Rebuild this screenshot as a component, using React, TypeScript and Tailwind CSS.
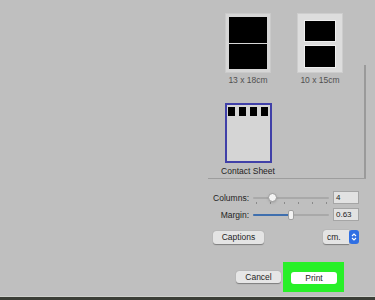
import React from 'react';

// Print dialog fragment: layout thumbnails, sliders and the action buttons
const COLUMN_TICKS = [3, 17, 31, 45, 59, 73];

const Slider: React.FC<{ value: number; knob: 'round' | 'flat'; fill?: boolean; ticks?: boolean }> = ({ value, knob, fill, ticks }) => (
  <div className="relative w-[76px] h-[12px]">
    <div className="absolute left-0 right-0 top-[5px] h-[2px] rounded-full bg-[#a9a9a9]" />
    {fill && <div className="absolute left-0 top-[5px] h-[2px] rounded-full bg-[#3f6fae]" style={{ width: value }} />}
    {ticks &&
      COLUMN_TICKS.map(t => (
        <div key={t} className="absolute top-[10px] h-[2px] w-px bg-[#8a8a8a]" style={{ left: t }} />
      ))}
    {knob === 'round' ? (
      <div className="absolute top-[1px] w-[9px] h-[9px] rounded-full bg-[#f4f4f4] border border-[#9a9a9a] shadow-sm" style={{ left: value - 4 }} />
    ) : (
      <div className="absolute top-[1px] w-[6px] h-[10px] rounded-[2px] bg-[#f2f2f2] border border-[#a0a0a0]" style={{ left: value - 3 }} />
    )}
  </div>
);

const Field: React.FC<{ value: string }> = ({ value }) => (
  <div className="w-[26px] h-[13px] bg-[#e2e2e2] border border-[#a5a5a5] px-[2px] text-[8px] leading-[11px] text-[#222]">{value}</div>
);

export default function App() {
  return (
    <div className="w-[375px] h-[300px] bg-[#bfbfbf] flex flex-col overflow-hidden" style={{ fontFamily: '"Liberation Sans", Arial, sans-serif' }}>
      {/* Thumbnails scroll area */}
      <div className="flex justify-end pr-[9px]">
        <div className="w-[158px] h-[179px] border-b border-[#9d9d9d] flex">
          <div className="flex-1 grid grid-cols-[72px_72px] pl-[4px] pt-[13px] content-start">
            <div className="flex flex-col items-center">
              <div className="w-[46px] h-[60px] bg-[#d6d6d6] border border-[#cacaca] p-[3px] flex flex-col gap-[1px]">
                <div className="flex-1 bg-black" />
                <div className="flex-1 bg-black" />
              </div>
              <div className="mt-[2px] text-[8.5px] leading-[10px] text-[#505050]">13 x 18cm</div>
            </div>
            <div className="flex flex-col items-center">
              <div className="w-[46px] h-[60px] bg-[#dddddd] border border-[#cdcdcd] pt-[6px] px-[6px] flex flex-col gap-[3px]">
                <div className="h-[22px] bg-black border border-[#efefef]" />
                <div className="h-[23px] bg-black border border-[#efefef]" />
              </div>
              <div className="mt-[2px] text-[8.5px] leading-[10px] text-[#505050]">10 x 15cm</div>
            </div>
            <div className="flex flex-col items-center mt-[18px]">
              <div className="w-[47px] h-[60px] bg-[#d5d5d5] border-2 border-solid border-[#4040a8] pt-[2px] pl-[1px] flex gap-[4px] items-start">
                <div className="w-[7px] h-[9px] bg-black" />
                <div className="w-[7px] h-[9px] bg-black" />
                <div className="w-[7px] h-[9px] bg-black" />
                <div className="w-[7px] h-[9px] bg-black" />
              </div>
              <div className="mt-[3px] text-[8.5px] leading-[10px] text-[#1e1e1e]">Contact Sheet</div>
            </div>
          </div>
          <div className="w-[2px] flex flex-col">
            <div className="mt-[65px] flex-1 bg-[#9a9a9a]" />
          </div>
        </div>
      </div>

      {/* Columns / margin */}
      <div className="flex justify-end pr-[16px] mt-[12px]">
        <div className="grid grid-cols-[41px_76px_26px] gap-x-[4px] gap-y-[4px] items-center w-[151px]">
          <div className="text-right text-[8.5px] leading-[12px] text-[#1e1e1e]">Columns:</div>
          <Slider value={19} knob="round" ticks />
          <Field value="4" />
          <div className="text-right text-[8.5px] leading-[12px] text-[#1e1e1e]">Margin:</div>
          <Slider value={38} knob="flat" fill />
          <Field value="0.63" />
        </div>
      </div>

      {/* Captions / units */}
      <div className="flex items-center pl-[213px] pr-[16px] mt-[9px]">
        <div className="w-[51px] h-[13px] rounded-[3px] bg-[#e4e4e4] shadow-[0_0.5px_1px_rgba(0,0,0,0.35)] text-[8.5px] leading-[13px] text-center text-[#1e1e1e]">Captions</div>
        <div className="ml-auto flex items-center">
          <div className="w-[26px] h-[14px] rounded-l-[3px] bg-[#e4e4e4] shadow-[0_0.5px_1px_rgba(0,0,0,0.35)] text-[8.5px] leading-[14px] pl-[4px] text-[#1e1e1e]">cm.</div>
          <div className="w-[10px] h-[14px] rounded-[3px] bg-[#2f6fe3] flex items-center justify-center">
            <svg width="6" height="10" viewBox="0 0 6 10" fill="none" stroke="white" strokeWidth="1.1">
              <path d="M1 4 L3 2 L5 4" />
              <path d="M1 6 L3 8 L5 6" />
            </svg>
          </div>
        </div>
      </div>

      {/* Cancel / Print */}
      <div className="flex items-center justify-end pr-[31px] mt-[18px] gap-[2px]">
        <div className="w-[45px] h-[12px] rounded-[3px] bg-[#e6e6e6] shadow-[0_0.5px_1px_rgba(0,0,0,0.35)] text-[8.5px] leading-[12px] text-center text-[#1e1e1e]">Cancel</div>
        <div className="w-[61px] h-[30px] bg-[#28f028] pl-[8px] pt-[10px]">
          <div className="w-[46px] h-[12px] rounded-[3px] bg-white text-[8.5px] leading-[12px] text-center text-[#1e1e1e]">Print</div>
        </div>
      </div>

      <div className="flex-1" />
      <div className="h-px bg-[#cfd0cc]" />
      <div className="h-[3px] bg-[#3b3e37]" />
    </div>
  );
}
